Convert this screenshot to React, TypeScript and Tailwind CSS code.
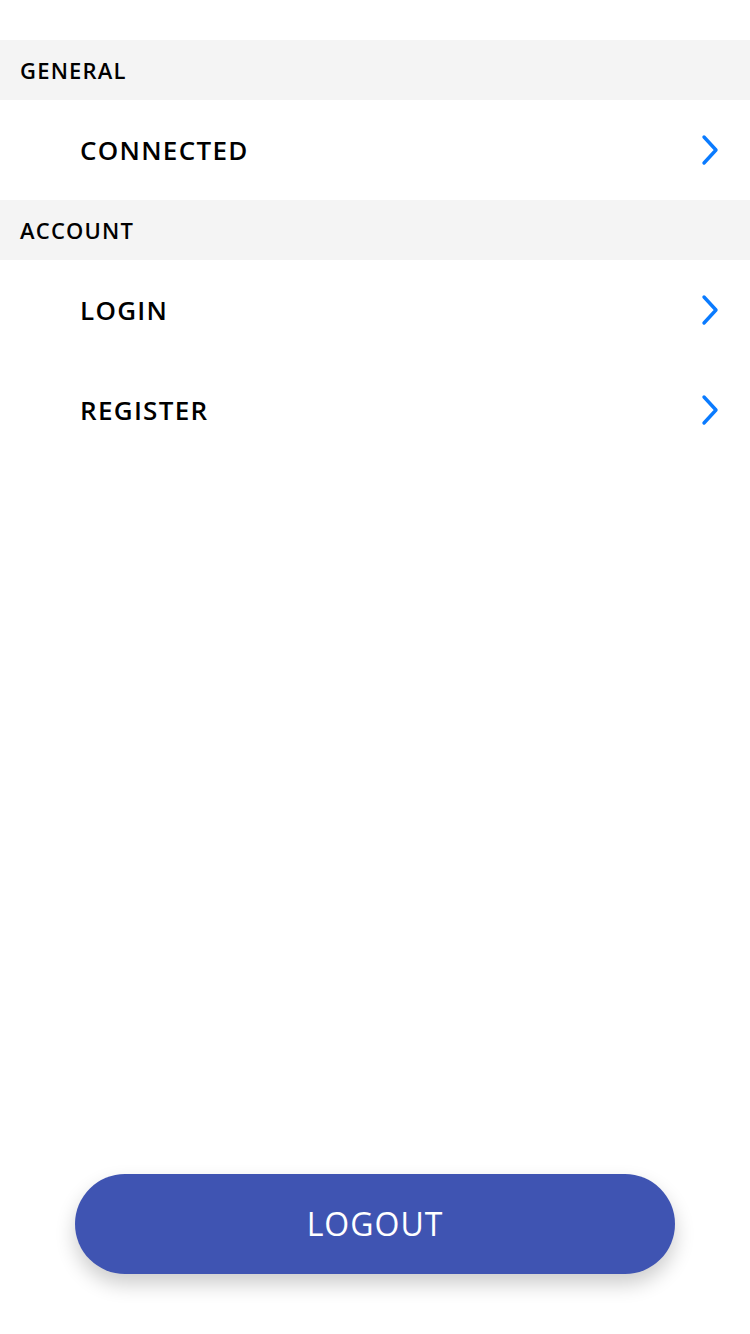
import React from 'react';

const SECTIONS = [
  { title: 'GENERAL', items: ['CONNECTED'] },
  { title: 'ACCOUNT', items: ['LOGIN', 'REGISTER'] }
];

function Chevron() {
  return (
    <svg width="20" height="32" viewBox="0 0 20 32" fill="none">
      <path d="M4 3 L16 16 L4 29" stroke="#0a7bff" strokeWidth="3.4" strokeLinecap="round" strokeLinejoin="round" />
    </svg>
  );
}

export default function App() {
  return (
    <div className="w-[750px] h-[1334px] bg-white flex flex-col pt-10 font-['Open_Sans',sans-serif] text-black">
      {SECTIONS.map(section => (
        <div key={section.title}>
          {/* section header */}
          <div className="h-[60px] bg-[#f4f4f4] flex items-center px-5">
            <span className="text-[22px] font-semibold tracking-[1.2px]">{section.title}</span>
          </div>
          {section.items.map(item => (
            <div key={item} className="h-[100px] flex items-center justify-between pl-20 pr-[30px]">
              <span className="text-[26px] font-semibold tracking-[1.3px]">{item}</span>
              <Chevron />
            </div>
          ))}
        </div>
      ))}

      <div className="flex-1" />

      <div className="flex justify-center pb-[60px]">
        <button className="w-[600px] h-[100px] rounded-full bg-[#3f54b2] text-white text-[32px] font-normal tracking-[1px] shadow-[0_10px_20px_rgba(0,0,0,0.2)]">
          LOGOUT
        </button>
      </div>
    </div>
  );
}
